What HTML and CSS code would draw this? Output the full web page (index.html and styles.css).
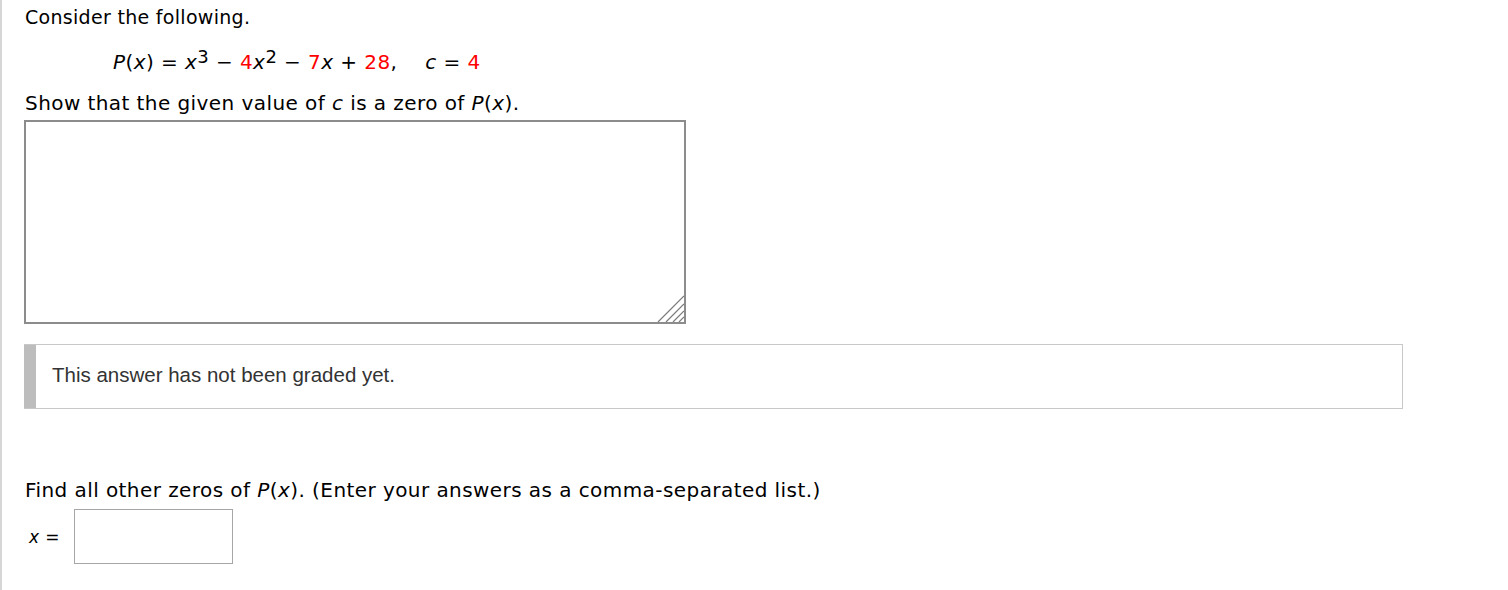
FILE: index.html
```html
<!DOCTYPE html>
<html lang="en">
<head>
    <meta charset="UTF-8">
    <title>Question</title>
    <link rel="stylesheet" href="styles.css">
</head>
<body>
    <div class="page">
        <p class="intro">Consider the following.</p>

        <p class="equation">
            <i>P</i>(<i>x</i>) = <i>x</i><sup>3</sup> &minus; <span class="red">4</span><i>x</i><sup>2</sup> &minus; <span class="red">7</span><i>x</i> + <span class="red">28</span>,<span class="gap"></span><i>c</i> = <span class="red">4</span>
        </p>

        <p class="prompt">Show that the given value of <i>c</i> is a zero of <i>P</i>(<i>x</i>).</p>

        <div class="area-wrap">
            <textarea class="answer-area"></textarea>
            <!-- resize grip -->
            <svg class="grip" width="28" height="28" viewBox="0 0 28 28">
                <g stroke="#7a7a7a" stroke-width="1.2">
                    <line x1="2" y1="28" x2="28" y2="2"/>
                    <line x1="10" y1="28" x2="28" y2="10"/>
                    <line x1="17" y1="28" x2="28" y2="17"/>
                    <line x1="23" y1="28" x2="28" y2="23"/>
                </g>
            </svg>
        </div>

        <div class="grade-box">
            <div class="grade-bar"></div>
            <div class="grade-text">This answer has not been graded yet.</div>
        </div>

        <p class="prompt find">Find all other zeros of <i>P</i>(<i>x</i>). (Enter your answers as a comma-separated list.)</p>

        <div class="answer-row">
            <label class="answer-label"><i>x</i> =</label>
            <input type="text" class="answer-input">
        </div>
    </div>
</body>
</html>
```

FILE: styles.css
```css
body {
    margin: 0;
    background: white;
}
.page {
    min-height: 590px;
    box-sizing: border-box;
    border-left: 2px solid #d6d6d6;
    padding: 5px 0 0 23px;
    font-family: "DejaVu Sans", Verdana, sans-serif;
    font-size: 20px;
    letter-spacing: 0.43px;
    color: #000;
}
p {
    margin: 0;
    line-height: 24px;
}
.intro {
    font-size: 19px;
    letter-spacing: 0.3px;
}
.equation {
    margin-top: 21px;
    padding-left: 88px;
}
.equation sup {
    font-size: 0.9em;
    line-height: 0;
    vertical-align: 6px;
}
.red {
    color: #f00;
}
.gap {
    display: inline-block;
    width: 28px;
}
.prompt {
    margin-top: 17px;
}
.area-wrap {
    position: relative;
    width: 662px;
    margin: 5px 0 0 -1px;
}
.answer-area {
    display: block;
    box-sizing: border-box;
    width: 662px;
    height: 204px;
    margin: 0;
    border: 2px solid #8c8c8c;
    resize: none;
}
.grip {
    position: absolute;
    right: 2px;
    bottom: 2px;
}
.grade-box {
    display: flex;
    width: 1379px;
    height: 65px;
    box-sizing: border-box;
    margin: 20px 0 0 -1px;
    border: 1px solid #c8c8c8;
    border-left: none;
}
.grade-bar {
    width: 12px;
    background: #bdbdbd;
}
.grade-text {
    display: flex;
    align-items: center;
    padding: 0 0 3px 16px;
    font-family: "Liberation Sans", Arial, sans-serif;
    font-size: 20.5px;
    letter-spacing: 0;
    color: #333;
}
.find {
    margin-top: 69px;
}
.answer-row {
    display: flex;
    align-items: center;
    margin-top: 7px;
}
.answer-label {
    width: 49px;
    padding-left: 4px;
    box-sizing: border-box;
    font-size: 17px;
}
.answer-input {
    width: 159px;
    height: 55px;
    box-sizing: border-box;
    border: 1px solid #a6a6a6;
    margin: 0;
}
```
